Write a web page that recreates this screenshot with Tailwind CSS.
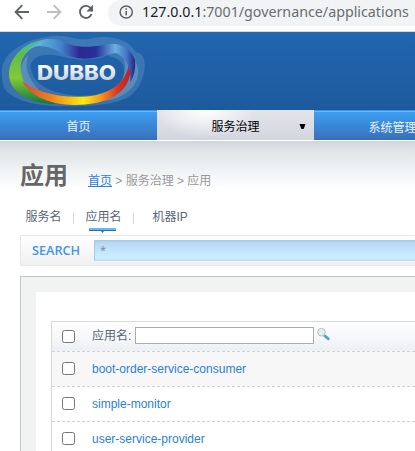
<!DOCTYPE html>
<html lang="zh">
<head>
<meta charset="utf-8">
<title>Dubbo</title>
<script src="https://cdn.jsdelivr.net/npm/@tailwindcss/browser@4"></script>
</head>
<body class="w-[415px] h-[451px] overflow-hidden bg-white font-['Liberation_Sans','Noto_Sans_CJK_SC',sans-serif] text-[12px] text-[#596675]">
<div class="h-[32px] flex items-start border-b border-[#d8d8da] overflow-hidden">
  <svg class="w-[108px] h-[31px] shrink-0" viewBox="0 0 108 31" fill="none" stroke-width="1.9">
    <path d="M29 12H16M22.3 5.2L15.6 12l6.7 6.8" stroke="#5f6368"/>
    <path d="M47 12h13M53.7 5.2L60.4 12l-6.7 6.8" stroke="#bcbec0"/>
    <path d="M90.7 8.2A6 6 0 1 0 91.6 14" stroke="#5f6368"/>
    <path d="M93 4.8v6.6h-6.6z" fill="#5f6368"/>
  </svg>
  <div class="flex flex-1 h-[26px] bg-[#f1f3f4] rounded-l-full pl-[11px] whitespace-nowrap">
    <svg class="w-[15px] h-[24px] shrink-0" viewBox="0 0 15 24"><circle cx="7.2" cy="12" r="6.1" fill="none" stroke="#5f6368" stroke-width="1.5"/><path d="M6.4 11h1.6v4.2H6.4zM6.4 8.2h1.6v1.6H6.4z" fill="#5f6368"/></svg>
    <span class="ml-[8px] leading-[24px] text-[14.25px] text-[#696d71] font-['Noto_Sans']"><span class="text-[#202124]">127.0.0.1</span>:7001/governance/applications</span>
  </div>
</div>
<header class="h-[78px] bg-linear-to-b from-[#2166af] to-[#1d5a9d]">
  <svg class="w-[150px] h-[78px]" viewBox="0 6 450 234">
    <defs>
      <linearGradient id="top" x1="60" x2="405" y1="0" y2="0" gradientUnits="userSpaceOnUse"><stop offset="0" stop-color="#55c1ab"/><stop offset=".17" stop-color="#61b0dd"/><stop offset=".35" stop-color="#4187cb"/><stop offset=".52" stop-color="#302790"/><stop offset=".66" stop-color="#25319a"/><stop offset=".83" stop-color="#69afe0"/><stop offset=".93" stop-color="#4075c3"/><stop offset="1" stop-color="#262383"/></linearGradient>
      <linearGradient id="low" x1="70" x2="398" y1="0" y2="0" gradientUnits="userSpaceOnUse"><stop offset="0" stop-color="#d94c2c"/><stop offset=".25" stop-color="#f08120"/><stop offset=".55" stop-color="#fdeb07"/><stop offset=".7" stop-color="#f89b1d"/><stop offset=".86" stop-color="#dc371f"/><stop offset="1" stop-color="#b91c28"/></linearGradient>
      <linearGradient id="left" x1="0" x2="0" y1="30" y2="220" gradientUnits="userSpaceOnUse"><stop offset="0" stop-color="#47b8ae"/><stop offset=".25" stop-color="#64bd48"/><stop offset=".6" stop-color="#82ca35"/><stop offset="1" stop-color="#157a3b"/></linearGradient>
      <linearGradient id="word" x1="0" x2="0" y1="105" y2="152" gradientUnits="userSpaceOnUse"><stop stop-color="#fff"/><stop offset="1" stop-color="#c3cdd8"/></linearGradient>
    </defs>
    <path fill="#8eb6d5" fill-opacity=".25" fill-rule="evenodd" d="M5 125C6 65 85 25 145 20C205 8 225 37 275 25C340 12 391 34 407 67C445 67 441 140 409 180C378 219 308 226 250 228C164 232 45 227 12 173Q4 149 5 125M27 132Q30 176 74 197Q28 150 37 99Q27 113 27 132M91 105C94 148 125 182 206 194C284 206 363 180 371 135C379 93 350 85 322 76C285 93 236 91 190 80C145 69 103 71 91 105"/>
    <path fill="#a5c6d5" fill-opacity=".3" d="M348 46C398 72 425 104 411 147C395 192 335 219 293 210C346 187 377 155 375 104Q372 70 348 46M85 74C72 111 83 144 118 180L72 164C54 130 60 99 85 74"/>
    <path fill="url(#left)" d="M153 27C75 28 29 81 27 130C25 184 85 220 158 222L178 218C112 209 60 168 62 110C64 70 104 39 153 27"/>
    <path fill="url(#low)" d="M66 153C96 204 158 224 220 225C307 226 400 197 391 103L387 98C381 158 326 199 245 200C170 203 106 184 66 153"/>
    <path fill="url(#top)" d="M108 41C130 25 155 24 180 31C225 54 260 54 310 45C352 33 393 50 405 91Q409 126 391 158C394 111 378 83 348 69C310 75 277 92 231 84C184 77 160 46 116 48Q94 49 72 76Q84 55 108 41"/>
    <text x="111" y="150" textLength="237" lengthAdjust="spacingAndGlyphs" font-family="Inter" font-size="60" font-weight="800" fill="url(#word)">DUBBO</text>
  </svg>
</header>
<nav class="h-[31px] flex overflow-hidden border-b border-white text-center leading-[35px] whitespace-nowrap">
  <div class="w-[157px] shrink-0 bg-linear-to-b from-[#3aa2f8] to-[#396fb9] text-white/90 shadow-[inset_0_1px_0_#3696e9,inset_0_2px_0_#6ebafa]">首页</div>
  <div class="w-[157px] shrink-0 flex bg-[radial-gradient(ellipse_50px_28px_at_48px_0,#ffffff,#ffffff00),linear-gradient(#e4e5e9,#d2d6de)] text-black"><span class="ml-[54px] w-[49px]">服务治理</span><svg class="ml-[39px] mt-[14px] w-[7px] h-[6px]" viewBox="0 0 7 6"><path d="M.5 0h6L4.6 5H2.4z" fill="#000"/></svg></div>
  <div class="w-[157px] shrink-0 bg-linear-to-b from-[#3aa2f8] to-[#396fb9] text-white/90 shadow-[inset_0_1px_0_#3696e9,inset_0_2px_0_#6ebafa] leading-[37px]">系统管理</div>
</nav>
<main class="h-[310px] bg-[linear-gradient(#d0d5de,#dfe3e7_8px,#e4e8eb_14px,#fff_48px)] pl-[20px] overflow-hidden">
  <div class="h-[65px] flex items-end whitespace-nowrap">
    <h1 class="w-[68px] text-[24px] font-bold leading-[30px] mb-[15px] text-[#666]">应用</h1>
    <div class="leading-[16px] mb-[17px] text-[#999]"><span class="text-[#2d7fd7] underline">首页</span> &gt; 服务治理 &gt; 应用</div>
  </div>
  <div class="h-[29px] flex leading-[23px] whitespace-nowrap">
    <span class="ml-[5.5px] w-[47px]">服务名</span><i class="w-px h-[11px] mt-[7px] bg-[#d5d8db]"></i>
    <div class="ml-[12px] w-[36px] shrink-0 flex flex-col items-center"><span>应用名</span>
      <svg class="-ml-[2px] -mt-[2px] w-[27px] h-[6px]" viewBox="0 0 27 6"><path d="M0 1h27v2H0z" fill="#6cb9ee"/><path d="M0 3h27v1H15l-1.5 2L12 4H0z" fill="#246fae"/></svg></div>
    <i class="ml-[11px] w-px h-[11px] mt-[7px] bg-[#d5d8db]"></i><span class="ml-[19px]">机器IP</span>
  </div>
  <div class="h-[31px] flex items-start border border-r-0 border-[#e5e7e9] bg-linear-to-b from-white to-[#f0f0f0]">
    <span class="ml-[11px] w-[62px] leading-[29px] text-[12.7px] font-semibold text-[#4295e8] font-['Open_Sans']">SEARCH</span>
    <div class="mt-[4px] h-[21px] flex-1 bg-[linear-gradient(#a5c8e9,#b8daf6_3px,#cceeff_18px,#b9dcec)] border-l border-[#a8c9e4] pl-[5px] leading-[20px] text-[11px] text-[#7c8791] font-['Open_Sans']">*</div>
  </div>
  <section class="mt-[10px] h-[180px] border-l border-t border-[#c4c6c8] bg-[#f1f3f3] pl-[15px] pt-[15px]">
    <div class="h-[165px] bg-white pl-[15px] pt-[29px]">
      <div class="border-l border-t border-[#d9d9d9]">
        <div class="h-[29px] flex items-start bg-linear-to-b from-white to-[#edf0f4]">
          <i class="ml-[10px] mt-[8px] w-[13px] h-[13px] rounded-[2.5px] border border-[#767676] bg-white"></i>
          <span class="ml-[17px] w-[43px] leading-[29px] whitespace-nowrap">应用名:</span>
          <div class="mt-[5px] w-[179px] h-[17px] border border-[#a9abac] bg-white"></div>
          <svg class="ml-[3px] mt-[5px] w-[13px] h-[14px]" viewBox="0 0 13 14"><path d="M7.7 8.7l3.5 3.1" stroke="#4ba0df" stroke-width="2.8" stroke-linecap="round"/><circle cx="4.5" cy="5.2" r="3.8" fill="#e5f0ed" stroke="#b2bcbb"/></svg>
        </div>
        <div class="h-[35px] flex items-start bg-[#f7f7f7] border-t border-dashed border-[#d0d2d5]"><i class="ml-[10px] mt-[10px] w-[13px] h-[13px] rounded-[2.5px] border border-[#767676] bg-white"></i><span class="ml-[17px] leading-[35px] text-[#2d7fd7]">boot-order-service-consumer</span></div>
        <div class="h-[35px] flex items-start border-t border-dashed border-[#d0d2d5]"><i class="ml-[10px] mt-[10px] w-[13px] h-[13px] rounded-[2.5px] border border-[#767676] bg-white"></i><span class="ml-[17px] leading-[35px] text-[#2d7fd7]">simple-monitor</span></div>
        <div class="h-[35px] flex items-start border-t border-dashed border-[#d0d2d5]"><i class="ml-[10px] mt-[10px] w-[13px] h-[13px] rounded-[2.5px] border border-[#767676] bg-white"></i><span class="ml-[17px] leading-[35px] text-[#2d7fd7]">user-service-provider</span></div>
      </div>
    </div>
  </section>
</main>
</body>
</html>
